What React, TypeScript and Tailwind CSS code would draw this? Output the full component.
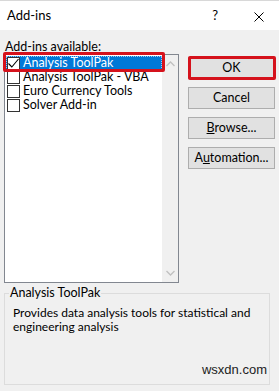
import React from "react";

const items = ["Analysis ToolPak", "Analysis ToolPak - VBA", "Euro Currency Tools", "Solver Add-in"];

function Check({ checked }: { checked: boolean }) {
  return (
    <div className="w-[13px] h-[13px] border border-[#333333] bg-white flex items-center justify-center shrink-0">
      {checked && (
        <svg width="11" height="11" viewBox="0 0 11 11">
          <path d="M0.5 5.5 L3.8 9 L10.5 1" fill="none" stroke="#000" strokeWidth="1.1" />
        </svg>
      )}
    </div>
  );
}

function Btn({ children, red }: { children: React.ReactNode; red?: boolean }) {
  return (
    <div className="relative h-[22px] w-[87px]">
      <div className="h-full w-full bg-[#e1e1e1] border border-[#adadad] flex items-center justify-center text-black leading-[14px]">
        {children}
      </div>
      {red && (
        <div className="absolute left-0 top-[-1px] right-[-1px] bottom-[-1px] border-[3px] border-[#d5121c] rounded-[2px]" />
      )}
    </div>
  );
}

export default function App() {
  return (
    <div
      className="w-[279px] h-[391px] bg-[#f0f0f0] relative overflow-hidden text-[12px] text-black"
      style={{ fontFamily: 'Lato, "Noto Sans", sans-serif' }}
    >
      <div className="h-[30px] bg-white flex items-center border-t border-[#d8d8d8] relative">
        <span className="ml-[7px] text-[13px]">Add-ins</span>
        <span className="ml-auto mr-[61px] text-[13px]">?</span>
        <svg className="absolute right-[15px] top-[11px]" width="10" height="10" viewBox="0 0 10 10">
          <path d="M0.5 0.5 L9.5 9.5 M9.5 0.5 L0.5 9.5" stroke="#000" strokeWidth="1" />
        </svg>
      </div>
      <div className="px-[4px] pt-[9px]">
        <div className="ml-[1px] h-[15px] leading-[15px] text-[12.5px]">
          <span className="underline">A</span>dd-ins available:
        </div>
        <div className="flex">
          <div className="relative w-[176px] h-[229px] border border-[#828790] bg-white flex">
            <div className="flex-1 flex flex-col pt-[1px] pl-[1px]">
              {items.map((t, i) => (
                <div
                  key={t}
                  className={
                    "h-[14px] flex items-center gap-[3px] pl-[1px] " +
                    (i === 0 ? "bg-[#0078d7] text-white outline-1 outline-dotted outline-[#a0c8f0] -outline-offset-1" : "")
                  }
                >
                  <Check checked={i === 0} />
                  <span className="leading-[14px] text-[12.5px]">{t}</span>
                </div>
              ))}
            </div>
            <div className="w-[16px] bg-[#f0f0f0] flex flex-col justify-between items-center py-[6px]">
              <svg width="9" height="6" viewBox="0 0 9 6">
                <path d="M0.5 5 L4.5 1 L8.5 5" fill="none" stroke="#c0c0c0" strokeWidth="1.3" />
              </svg>
              <svg width="9" height="6" viewBox="0 0 9 6">
                <path d="M0.5 1 L4.5 5 L8.5 1" fill="none" stroke="#c0c0c0" strokeWidth="1.3" />
              </svg>
            </div>
            <div className="absolute left-[-2px] top-[-3px] w-[162px] h-[20px] border-[3px] border-[#d5121c] rounded-[2px]" />
          </div>
          <div className="ml-[9px] mt-[3px] flex flex-col gap-[8px] text-[12.5px]">
            <Btn red>OK</Btn>
            <Btn>Cancel</Btn>
            <Btn>
              <span>
                <span className="underline">B</span>rowse...
              </span>
            </Btn>
            <Btn>
              <span>
                A<span className="underline">u</span>tomation...
              </span>
            </Btn>
          </div>
        </div>
        <fieldset className="mt-[3px] w-[266px] h-[99px] border border-[#dcdcdc] pl-[8px] pr-[2px] pb-[2px] flex flex-col">
          <legend className="ml-[-4px] px-[1px] leading-[14px] text-[12.5px]">Analysis ToolPak</legend>
          <div className="mt-[6px] leading-[14px] whitespace-nowrap text-[12px]">
            Provides data analysis tools for statistical and
            <br />
            engineering analysis
          </div>
          <div
            className="mt-auto self-end mr-[0px] mb-[5px] text-[13px] text-[#222] leading-[15px]"
            style={{ fontFamily: '"Liberation Sans", Arial, sans-serif' }}
          >
            wsxdn.com
          </div>
        </fieldset>
      </div>
    </div>
  );
}
